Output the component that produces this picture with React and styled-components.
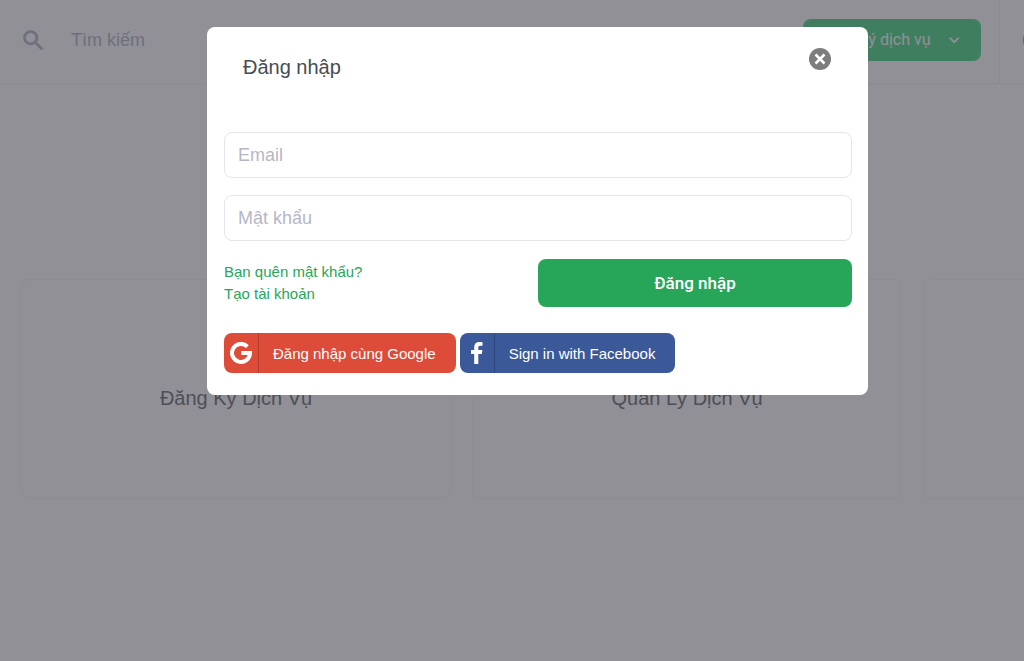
import React, { useState } from 'react';
import styled, { createGlobalStyle } from 'styled-components';

const GlobalStyle = createGlobalStyle`
    * {
        box-sizing: border-box;
    }
    body {
        margin: 0;
        overflow: hidden;
        background: #fff;
        color: #474c52;
        font-family: "Liberation Sans", Arial, sans-serif;
    }
    button, input {
        font-family: inherit;
    }
`

const Page = styled.div`
    min-height: 100vh;
    overflow: hidden;
`
const Header = styled.header`
    display: flex;
    align-items: stretch;
    height: 84px;
    border-bottom: 1px solid #eff0f4;
`
const SearchBox = styled.label`
    display: flex;
    flex: 1;
    align-items: center;
    gap: 24px;
    padding: 0 0 3px 20px;
    color: #a2a5b9;
`
const SearchInput = styled.input`
    flex: 1;
    padding: 0;
    border: 0;
    outline: 0;
    background: none;
    font-size: 18px;
    &::placeholder {
        color: #a2a5b9;
        opacity: 1;
    }
`
const HeaderMenu = styled.div`
    display: flex;
    align-items: center;
    padding: 0 18px 3px 0;
    border-right: 1px solid #eff0f4;
`
const MenuButton = styled.button`
    display: flex;
    align-items: center;
    justify-content: flex-end;
    gap: 16px;
    width: 178px;
    height: 42px;
    padding: 0 20px 2px 16px;
    border: 0;
    border-radius: 8px;
    background: #20d068;
    color: #fff;
    font-family: Roboto, sans-serif;
    font-size: 16px;
    white-space: nowrap;
`
const Account = styled.div`
    display: flex;
    align-items: center;
    width: 24px;
    padding: 0 0 4px 23px;
`
const Avatar = styled.span`
    flex: none;
    width: 24px;
    height: 24px;
    border-radius: 50%;
    background: #74788d;
`
const Services = styled.main`
    display: grid;
    grid-auto-flow: column;
    grid-auto-columns: 42vw;
    gap: 21px;
    padding: 195px 0 0 21px;
`
const ServiceCard = styled.section`
    display: flex;
    align-items: center;
    justify-content: center;
    height: 220px;
    padding-top: 18px;
    border: 1px solid #f3f4f6;
    border-radius: 8px;
    font-size: 20px;
`

const Overlay = styled.div`
    position: fixed;
    inset: 0;
    padding: 27px 156px 0 207px;
    background: rgba(81, 82, 91, 0.64);
`
const Modal = styled.div`
    padding: 0 16px 22px 17px;
    border-radius: 8px;
    background: #fff;
`
const ModalHeader = styled.div`
    display: flex;
    align-items: flex-start;
    justify-content: space-between;
    height: 105px;
    padding: 20px 20px 0 19px;
`
const Title = styled.h2`
    margin: 8px 0 0;
    font-size: 20px;
    font-weight: 400;
    line-height: 24px;
`
const CloseButton = styled.button`
    display: flex;
    padding: 0;
    border: 0;
    background: none;
`
const Fields = styled.div`
    display: flex;
    flex-direction: column;
    gap: 17px;
`
const Field = styled.input`
    width: 100%;
    height: 46px;
    padding: 0 13px;
    border: 1px solid #e2e5ec;
    border-radius: 8px;
    outline: 0;
    font-size: 18px;
    &::placeholder {
        color: #b5b7c8;
        opacity: 1;
    }
`
const Actions = styled.div`
    display: grid;
    grid-template-columns: 1fr 1fr;
    align-items: center;
    margin-top: 18px;
`
const Links = styled.div`
    display: flex;
    flex-direction: column;
    align-items: flex-start;
`
const TextLink = styled.a`
    color: #27a65a;
    font-size: 15px;
    line-height: 22px;
    text-decoration: none;
`
const SubmitButton = styled.button`
    height: 48px;
    padding: 0;
    border: 0;
    border-radius: 8px;
    background: #27a65a;
    color: #fff;
    font-family: Roboto, sans-serif;
    font-size: 17px;
    font-weight: 500;
`
const Social = styled.div`
    display: flex;
    gap: 4px;
    margin-top: 26px;
`
const SocialButton = styled.button`
    display: flex;
    align-items: center;
    height: 40px;
    padding: 0;
    border: 0;
    border-radius: 8px;
    background: ${props => props.$color};
    color: #fff;
    font-size: 15px;
`
const SocialIcon = styled.span`
    display: flex;
    align-items: center;
    justify-content: center;
    width: 35px;
    height: 40px;
    border-right: 1px solid rgba(0, 0, 0, 0.2);
`
const SocialText = styled.span`
    padding: 0 20px 0 14px;
`

const SearchIcon = () => (
    <svg width="27" height="27" viewBox="0 0 24 24" fill="currentColor" stroke="currentColor" strokeWidth="0.5" aria-hidden="true">
        <path d="M15.5 14h-.79l-.28-.27A6.47 6.47 0 0 0 16 9.5 6.5 6.5 0 1 0 9.5 16c1.61 0 3.09-.59 4.23-1.57l.27.28v.79l5 4.99L20.49 19l-4.99-5zm-6 0C7.01 14 5 11.99 5 9.5S7.01 5 9.5 5 14 7.01 14 9.5 11.99 14 9.5 14z" />
    </svg>
)

const ChevronIcon = () => (
    <svg width="16" height="14" viewBox="0 0 16 14" fill="none" stroke="currentColor" strokeWidth="2" aria-hidden="true">
        <path d="M3 5.500l5 5 5-5" />
    </svg>
)

const CloseIcon = () => (
    <svg width="24" height="24" viewBox="0 0 24 24" aria-hidden="true">
        <circle cx="12" cy="12" r="11" fill="#7d7d7d" />
        <path d="M7.5 7.5l9 9M16.5 7.5l-9 9" stroke="#fff" strokeWidth="2.6" />
    </svg>
)

const GoogleIcon = () => (
    <svg width="22" height="22" viewBox="0 0 22 22" fill="none" stroke="#fff" strokeWidth="4" aria-hidden="true">
        <path d="M17.4 4.6A9 9 0 1 0 20 11H11.3" />
    </svg>
)

const FacebookIcon = () => (
    <svg width="12" height="22" viewBox="0 0 12 22" fill="#fff" aria-hidden="true">
        <path d="M3.2 22V12H0V8.1h3.2V5.1C3.2 1.8 5.2 0 8.3 0c1.4 0 2.7.1 3.2.2v3.6H9.4C7.7 3.8 7.3 4.6 7.3 5.8v2.3h4.1L10.8 12H7.3v10z" />
    </svg>
)

const services = ['Đăng Ký Dịch Vụ', 'Quản Lý Dịch Vụ', ''];

const LoginModal = ({ onClose }) => {
    const [email, setEmail] = useState('');
    const [password, setPassword] = useState('');

    return (
        <Overlay>
            <Modal role="dialog" aria-modal="true" aria-labelledby="login-title">
                <ModalHeader>
                    <Title id="login-title">Đăng nhập</Title>
                    <CloseButton type="button" aria-label="Đóng" onClick={onClose}><CloseIcon /></CloseButton>
                </ModalHeader>
                <form onSubmit={e => e.preventDefault()}>
                    <Fields>
                        <Field type="email" placeholder="Email" aria-label="Email" value={email} onChange={e => setEmail(e.target.value)} />
                        <Field type="password" placeholder="Mật khẩu" aria-label="Mật khẩu" value={password} onChange={e => setPassword(e.target.value)} />
                    </Fields>
                    <Actions>
                        <Links>
                            <TextLink href="#forgot">Bạn quên mật khẩu?</TextLink>
                            <TextLink href="#register">Tạo tài khoản</TextLink>
                        </Links>
                        <SubmitButton type="submit">Đăng nhập</SubmitButton>
                    </Actions>
                </form>
                <Social>
                    <SocialButton type="button" $color="#dd4b39">
                        <SocialIcon><GoogleIcon /></SocialIcon>
                        <SocialText>Đăng nhập cùng Google</SocialText>
                    </SocialButton>
                    <SocialButton type="button" $color="#3b5998">
                        <SocialIcon><FacebookIcon /></SocialIcon>
                        <SocialText>Sign in with Facebook</SocialText>
                    </SocialButton>
                </Social>
            </Modal>
        </Overlay>
    )
}

const App = () => {
    const [open, setOpen] = useState(true);

    return (
        <>
            <GlobalStyle />
            <Page>
                <Header>
                    <SearchBox>
                        <SearchIcon />
                        <SearchInput type="text" placeholder="Tìm kiếm" aria-label="Tìm kiếm" />
                    </SearchBox>
                    <HeaderMenu>
                        <MenuButton type="button" onClick={() => setOpen(true)}>
                            Đăng ký dịch vụ
                            <ChevronIcon />
                        </MenuButton>
                    </HeaderMenu>
                    <Account><Avatar /></Account>
                </Header>
                <Services>
                    {services.map((name, i) => <ServiceCard key={i}>{name}</ServiceCard>)}
                </Services>
            </Page>
            {open && <LoginModal onClose={() => setOpen(false)} />}
        </>
    )
}

export default App;
